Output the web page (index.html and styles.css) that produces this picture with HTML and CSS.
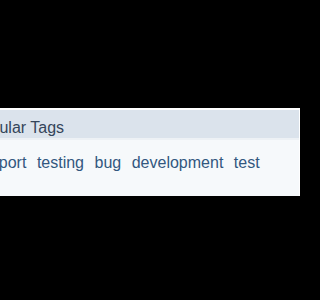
FILE: index.html
```html
<!DOCTYPE html>
<html>
<head>
<meta charset="utf-8">
<link rel="stylesheet" href="styles.css">
</head>
<body>
<div class="panel">
  <div class="panel-header">Popular Tags</div>
  <div class="panel-body">
    <a class="tag" href="#">support</a>
    <a class="tag" href="#">testing</a>
    <a class="tag" href="#">bug</a>
    <a class="tag" href="#">development</a>
    <a class="tag" href="#">test</a>
  </div>
</div>
</body>
</html>
```
FILE: styles.css
```css
html, body {
  margin: 0;
  padding: 0;
  background: #000;
  overflow: hidden;
}
body {
  min-height: 100vh;
  padding-top: 108px;
  box-sizing: border-box;
  font-family: "Liberation Sans", Arial, sans-serif;
  font-size: 16px;
}
.panel {
  margin-left: -40px;
  width: 340px;
  box-sizing: border-box;
  background: #f6f9fb;
  border-top: 2px solid #ffffff;
  border-right: 1px solid #ffffff;
}
.panel-header {
  background: #dbe3ec;
  color: #34455a;
  line-height: 18px;
  padding: 9px 0 1px 11px;
  border-bottom: 2px solid #edf1f5;
}
.panel-body {
  display: flex;
  gap: 10.5px;
  padding: 14px 0 24px 13px;
  line-height: 18px;
}
.tag {
  color: #32577f;
  text-decoration: none;
  white-space: nowrap;
}
```
